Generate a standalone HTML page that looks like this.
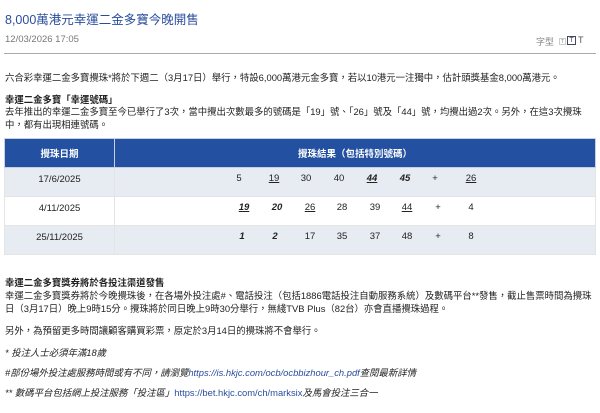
<!DOCTYPE html>
<html><head><meta charset="utf-8"><style>
*{margin:0;padding:0;box-sizing:border-box}
body{width:600px;height:413px;background:#fff;font-family:"Liberation Sans","Noto Sans CJK TC",sans-serif;color:#222;position:relative;overflow:hidden;font-size:9px}
.a{position:absolute;white-space:nowrap}
.t{left:5px;top:9px;font-size:12.5px;color:#2a4d9c}
.d{left:5px;top:34px;font-size:9.5px;color:#777}
.hr{position:absolute;left:4px;right:4px;top:53px;border-top:1px solid #aaa}
.p{left:5px;font-size:9.4px;color:#222}
.b{font-weight:bold}
table{position:absolute;left:4px;top:138px;width:592px;border-collapse:collapse;font-size:9.5px}
td{border:1px solid #e4e4e4}
.h{background:#2350a0;color:#fff;height:29px;text-align:center;font-weight:bold}
.h td{border-color:#c8d0e0}
.r1,.r3{background:#e7ebf2}
.r{height:29px}
.n{position:absolute;font-size:9.5px;transform:translateX(-50%)}
.u{text-decoration:underline}
.i{font-style:italic;font-weight:bold}
.it{font-style:italic}
.lk{color:#2a4d9c}
</style></head><body>
<div class="a t">8,000萬港元幸運二金多寶今晚開售</div>
<div class="a d">12/03/2026 17:05</div>
<div class="a" style="left:536px;top:35px;font-size:9px;color:#888">字型</div>
<div class="a" style="left:559px;top:38px;width:7px;height:7px;border:1px solid #ccc;font-size:5px;color:#888;text-align:center;line-height:6px">T</div>
<div class="a" style="left:567px;top:36px;width:9px;height:9px;border:1px solid #446;font-size:7px;color:#444;text-align:center;line-height:8px">T</div>
<div class="a" style="left:578px;top:35px;font-size:9px;color:#555">T</div>
<div class="hr"></div>
<div class="a p" style="top:70px">六合彩幸運二金多寶攪珠*將於下週二（3月17日）舉行，特設6,000萬港元金多寶，若以10港元一注獨中，估計頭獎基金8,000萬港元。</div>
<div class="a p b" style="top:92px">幸運二金多寶「幸運號碼」</div>
<div class="a p" style="top:104px">去年推出的幸運二金多寶至今已舉行了3次，當中攪出次數最多的號碼是「19」號、「26」號及「44」號，均攪出過2次。另外，在這3次攪珠</div>
<div class="a p" style="top:117px">中，都有出現相連號碼。</div>
<table>
<tr class="h"><td style="width:110px">攪珠日期</td><td>攪珠結果（包括特別號碼）</td></tr>
<tr class="r r1"><td style="text-align:center;vertical-align:top;padding-top:6px">17/6/2025</td><td></td></tr>
<tr class="r r2"><td style="text-align:center;vertical-align:top;padding-top:6px">4/11/2025</td><td></td></tr>
<tr class="r r3"><td style="text-align:center;vertical-align:top;padding-top:6px">25/11/2025</td><td></td></tr>
</table>
<div style="position:absolute;left:0;top:173px;width:600px">
<span class="n" style="left:239px">5</span><span class="n u" style="left:274px">19</span><span class="n" style="left:306px">30</span><span class="n" style="left:339px">40</span><span class="n u i" style="left:372px">44</span><span class="n i" style="left:405px">45</span><span class="n" style="left:435px">+</span><span class="n u" style="left:471px">26</span>
</div>
<div style="position:absolute;left:0;top:202px;width:600px">
<span class="n u i" style="left:244px">19</span><span class="n i" style="left:277px">20</span><span class="n u" style="left:310px">26</span><span class="n" style="left:342px">28</span><span class="n" style="left:375px">39</span><span class="n u" style="left:407px">44</span><span class="n" style="left:438px">+</span><span class="n" style="left:471px">4</span>
</div>
<div style="position:absolute;left:0;top:231px;width:600px">
<span class="n i" style="left:242px">1</span><span class="n i" style="left:275px">2</span><span class="n" style="left:310px">17</span><span class="n" style="left:342px">35</span><span class="n" style="left:375px">37</span><span class="n" style="left:407px">48</span><span class="n" style="left:438px">+</span><span class="n" style="left:471px">8</span>
</div>
<div class="a p b" style="top:275px">幸運二金多寶獎券將於各投注渠道發售</div>
<div class="a p" style="top:288px">幸運二金多寶獎券將於今晚攪珠後，在各場外投注處#、電話投注（包括1886電話投注自動服務系統）及數碼平台**發售，截止售票時間為攪珠</div>
<div class="a p" style="top:301px">日（3月17日）晚上9時15分。攪珠將於同日晚上9時30分舉行，無綫TVB Plus（82台）亦會直播攪珠過程。</div>
<div class="a p" style="top:323px">另外，為預留更多時間讓顧客購買彩票，原定於3月14日的攪珠將不會舉行。</div>
<div class="a p it" style="top:345px">* 投注人士必須年滿18歲</div>
<div class="a p it" style="top:365px">#部份場外投注處服務時間或有不同，請瀏覽<span class="lk">https://is.hkjc.com/ocb/ocbbizhour_ch.pdf</span>查閱最新詳情</div>
<div class="a p it" style="top:385px">** 數碼平台包括網上投注服務「投注區」<span class="lk" style="font-style:normal">https://bet.hkjc.com/ch/marksix</span>及馬會投注三合一</div>
</body></html>
